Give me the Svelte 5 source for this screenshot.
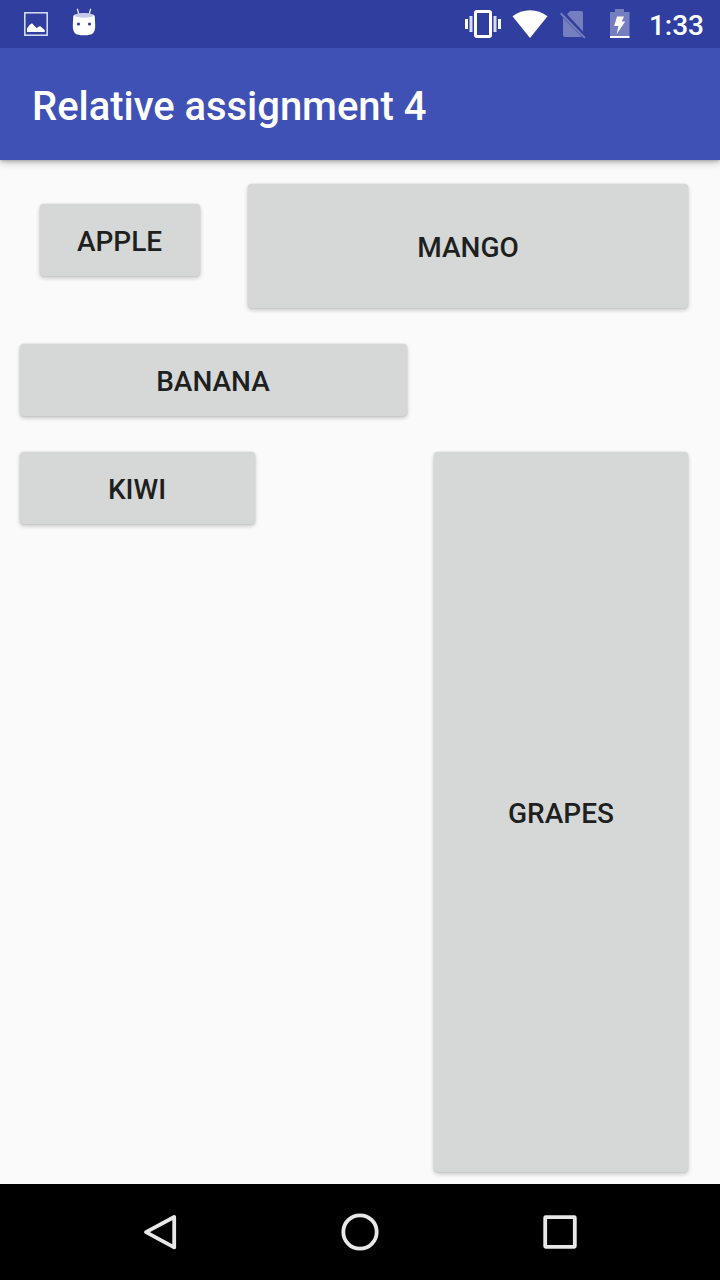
<script>
  const title = 'Relative assignment 4';
</script>

<div class="screen">
  <header class="status">
    <svg class="picture" width="24" height="48" viewBox="24 0 24 48">
      <rect x="24.8" y="12.8" width="22.4" height="22.4" fill="none" stroke="#d3d7ed" stroke-width="1.6" />
      <path d="M27 32V28.5L29.5 25L32 23.2L36.5 28L40 26L44.7 30V32Z" fill="#fff" />
    </svg>
    <svg class="droid" width="24" height="48" viewBox="72 0 24 48">
      <path d="M78.8 14L77.3 8.7M89.2 14L90.7 8.7" stroke="#e1e4f3" stroke-width="1.3" />
      <path d="M73.3 16C74 12.5 94 12.5 94.7 16L95.2 25C95.2 33 93 35.3 84 35.3S72.8 33 72.8 25Z" fill="#fff" />
      <ellipse cx="84" cy="15.4" rx="9.5" ry="2.3" fill="#c5cae9" />
      <circle cx="78.5" cy="24" r="1.6" fill="#303f9f" />
      <circle cx="89.5" cy="24" r="1.6" fill="#303f9f" />
    </svg>
    <svg class="vibrate" width="40" height="48" viewBox="463 0 40 48">
      <rect x="475.5" y="11.5" width="15" height="25" rx="1.5" fill="none" stroke="#fff" stroke-width="3" />
      <path d="M466.5 19V29M499.5 19V29" stroke="#fff" stroke-width="3" />
      <path d="M471 16V32M495 16V32" stroke="#d8dbef" stroke-width="3" />
    </svg>
    <svg class="wifi" width="36" height="48" viewBox="512 0 36 48">
      <path d="M512.5 16.2C522.5 8.2 537.5 8.2 547.5 16.2L530 38Z" fill="#fff" />
    </svg>
    <svg class="sim" width="26" height="48" viewBox="560 0 26 48">
      <g fill="#757fbf">
        <path d="M567 14.3L570.2 11H581Q583 11 583 13V31.5Z" />
        <path d="M563 17.5L581.6 36.6L581 37H565Q563 37 563 35Z" />
        <path d="M561.4 12.6L585.6 37.2L584.2 38.6L560 14Z" />
      </g>
    </svg>
    <svg class="battery" width="20" height="48" viewBox="610 0 20 48">
      <path d="M610 12H615V9H624V12H629.5V36H610Z" fill="#757fbf" />
      <path d="M610 36H629.5V38H610Z" fill="#fff" />
      <path d="M617 16.5H624L621.7 21.6H625.2L616.7 34L618.5 26H614.2Z" fill="#fff" />
    </svg>
    <span class="clock">1:33</span>
  </header>

  <div class="toolbar"><h1>{title}</h1></div>

  <main>
    <div class="row top">
      <button class="apple">APPLE</button>
      <button class="mango">MANGO</button>
    </div>
    <div class="row">
      <button class="banana">BANANA</button>
    </div>
    <div class="row bottom">
      <button class="kiwi">KIWI</button>
      <button class="grapes">GRAPES</button>
    </div>
  </main>

  <nav>
    <svg width="48" height="48" viewBox="0 0 48 48">
      <path d="M38.2 9V39.4L10 24.2Z" />
    </svg>
    <svg width="48" height="48" viewBox="0 0 48 48">
      <circle cx="24" cy="24" r="16.7" />
    </svg>
    <svg width="48" height="48" viewBox="0 0 48 48">
      <rect x="9.2" y="9.2" width="29.6" height="29.6" rx="0.5" />
    </svg>
  </nav>
</div>

<style>
  :global(body) {
    margin: 0;
  }
  .screen {
    width: 720px;
    height: 1280px;
    display: flex;
    flex-direction: column;
    overflow: hidden;
    background: #fafafa;
    font-family: Roboto, sans-serif;
  }
  svg {
    display: block;
    flex: none;
  }
  .status {
    position: relative;
    z-index: 1;
    height: 48px;
    flex: none;
    display: flex;
    box-sizing: border-box;
    padding: 0 16px 0 24px;
    background: #303f9f;
    color: #fff;
  }
  .droid {
    margin-left: 24px;
  }
  .vibrate {
    margin-left: auto;
  }
  .wifi {
    margin-left: 9px;
  }
  .sim {
    margin-left: 12px;
  }
  .battery {
    margin-left: 24px;
  }
  .clock {
    width: 56px;
    margin-left: 18px;
    font-size: 28px;
    font-weight: 500;
    line-height: 52px;
    text-align: right;
    white-space: nowrap;
  }
  .toolbar {
    height: 112px;
    flex: none;
    display: flex;
    align-items: center;
    box-sizing: border-box;
    padding: 6px 32px 0;
    background: #3f51b5;
    color: #fff;
    box-shadow: 0 2px 8px rgba(0, 0, 0, 0.28), 0 1px 3px rgba(0, 0, 0, 0.2);
  }
  h1 {
    margin: 0;
    font-size: 40px;
    font-weight: 500;
    line-height: 48px;
    letter-spacing: -0.04px;
  }
  main {
    flex: 1;
    display: flex;
    flex-direction: column;
    gap: 36px;
    box-sizing: border-box;
    padding: 24px 32px 12px 20px;
  }
  .row {
    display: flex;
    justify-content: space-between;
    align-items: flex-start;
  }
  .bottom {
    flex: 1;
  }
  button {
    height: 72px;
    box-sizing: border-box;
    padding: 4px 0 0;
    border: 0;
    border-radius: 4px;
    background: #d6d8d7;
    color: #1e1f1f;
    font: 500 28px/32px Roboto, sans-serif;
    box-shadow: 0 2px 4px rgba(0, 0, 0, 0.22), 0 0 2px rgba(0, 0, 0, 0.14);
  }
  .apple {
    width: 160px;
    margin: 20px 0 0 20px;
    padding-right: 1px;
  }
  .mango {
    width: 440px;
    height: 124px;
  }
  .banana {
    width: 387px;
    padding-right: 1px;
  }
  .kiwi {
    width: 235px;
    padding-right: 1px;
  }
  .grapes {
    width: 254px;
    height: 100%;
  }
  nav {
    height: 96px;
    flex: none;
    display: flex;
    justify-content: space-between;
    align-items: center;
    box-sizing: border-box;
    padding: 0 136px;
    background: #000;
  }
  nav svg {
    fill: none;
    stroke: #e8e8e8;
    stroke-width: 3.8;
    stroke-linejoin: round;
  }
</style>
